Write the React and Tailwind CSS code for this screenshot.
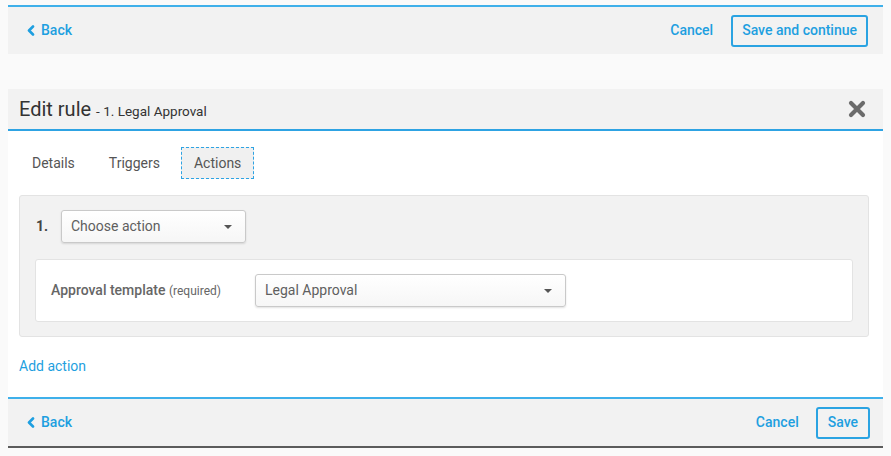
import { useState } from "react";

const BLUE = "text-[#1e9fe0]";

function ChevronLeft() {
  return (
    <svg width="8" height="11" viewBox="0 0 8 11" className="shrink-0">
      <polyline
        points="6,1.5 2,5.5 6,9.5"
        fill="none"
        stroke="currentColor"
        strokeWidth="2.6"
        strokeLinecap="round"
        strokeLinejoin="round"
      />
    </svg>
  );
}

function Caret() {
  return (
    <svg width="8" height="4" viewBox="0 0 8 4">
      <path d="M0 0h8L4 4z" fill="#555" />
    </svg>
  );
}

function CloseIcon() {
  return (
    <svg width="18" height="18" viewBox="0 0 18 18">
      <path
        d="M3 3L15 15M15 3L3 15"
        stroke="#6b6b6b"
        strokeWidth="4.2"
        strokeLinecap="round"
      />
    </svg>
  );
}

function Select({ value, className }) {
  return (
    <button
      type="button"
      className={
        "flex items-center justify-between rounded-[3px] border border-[#c9c9c9] bg-gradient-to-b from-white to-[#f6f6f6] pl-[9px] pr-[13px] text-[14px] text-[#5f5f5f] shadow-[0_1px_2px_rgba(0,0,0,0.12)] " +
        className
      }
    >
      <span>{value}</span>
      <Caret />
    </button>
  );
}

function BackLink() {
  return (
    <a href="#" className={`flex items-center gap-[6px] text-[14px] font-medium ${BLUE}`}>
      <ChevronLeft />
      Back
    </a>
  );
}

export default function App() {
  const [tab, setTab] = useState("Actions");
  const tabs = ["Details", "Triggers", "Actions"];

  return (
    <div className="min-h-[456px] w-[891px] bg-[#fafafa] px-2 pt-[5px] font-['Roboto','Liberation_Sans',sans-serif]">
      {/* top bar */}
      <div className="flex h-[49px] items-center justify-between border-t-2 border-[#3fb0ea] bg-[#f2f2f2] pl-[19px] pr-[15px]">
        <BackLink />
        <div className="flex items-center gap-[18px]">
          <a href="#" className={`text-[14px] font-medium ${BLUE}`}>Cancel</a>
          <button className={`h-[32px] rounded-[3px] border-2 border-[#2aa3e2] px-[9px] text-[14px] font-medium ${BLUE}`}>
            Save and continue
          </button>
        </div>
      </div>

      {/* modal */}
      <div className="mt-[35px]">
        <div className="flex h-[42px] items-center justify-between border-b-2 border-[#2ea3e3] bg-[#f2f2f2] pl-[11px] pr-[17px]">
          <div className="flex items-baseline text-[#333]">
            <span className="text-[20px]">Edit rule</span>
            <span className="ml-[5px] text-[13.5px]">- 1. Legal Approval</span>
          </div>
          <CloseIcon />
        </div>

        <div className="bg-white pt-4 pb-[20px]">
          <div className="flex gap-2 pl-[11px]">
            {tabs.map((t) => (
              <button
                key={t}
                onClick={() => setTab(t)}
                className={
                  "h-[32px] px-3 text-[14px] text-[#555] " +
                  (tab === t
                    ? "border border-dashed border-[#2ea3e3] bg-[#f0f0f0]"
                    : "border border-transparent")
                }
              >
                {t}
              </button>
            ))}
          </div>

          <div className="ml-[11px] mr-[14px] mt-4 rounded-[3px] border border-[#e3e3e3] bg-[#f2f2f2] px-[15px] pb-[14px] pt-[14px]">
            <div className="flex items-center">
              <span className="ml-px w-[25px] text-[14px] font-bold text-[#444]">1.</span>
              <Select value="Choose action" className="h-[33px] w-[185px]" />
            </div>
            <div className="mt-4 flex items-center rounded-[3px] border border-[#e3e3e3] bg-white py-[14px] pl-[15px]">
              <span className="w-[204px] text-[14px] font-medium text-[#666]">
                Approval template <span className="text-[12px] font-normal">(required)</span>
              </span>
              <Select value="Legal Approval" className="h-[33px] w-[311px]" />
            </div>
          </div>

          <a href="#" className={`ml-[11px] mt-[19px] block text-[14px] ${BLUE}`}>Add action</a>
        </div>

        <div className="flex h-[51px] items-center justify-between border-b-2 border-t-2 border-b-[#5c5c5c] border-t-[#3fb0ea] bg-[#f2f2f2] pl-[19px] pr-[13px]">
          <BackLink />
          <div className="flex items-center gap-[17px]">
            <a href="#" className={`text-[14px] font-medium ${BLUE}`}>Cancel</a>
            <button className={`h-[32px] rounded-[3px] border-2 border-[#2aa3e2] px-[10px] text-[14px] font-medium ${BLUE}`}>
              Save
            </button>
          </div>
        </div>
      </div>
    </div>
  );
}
